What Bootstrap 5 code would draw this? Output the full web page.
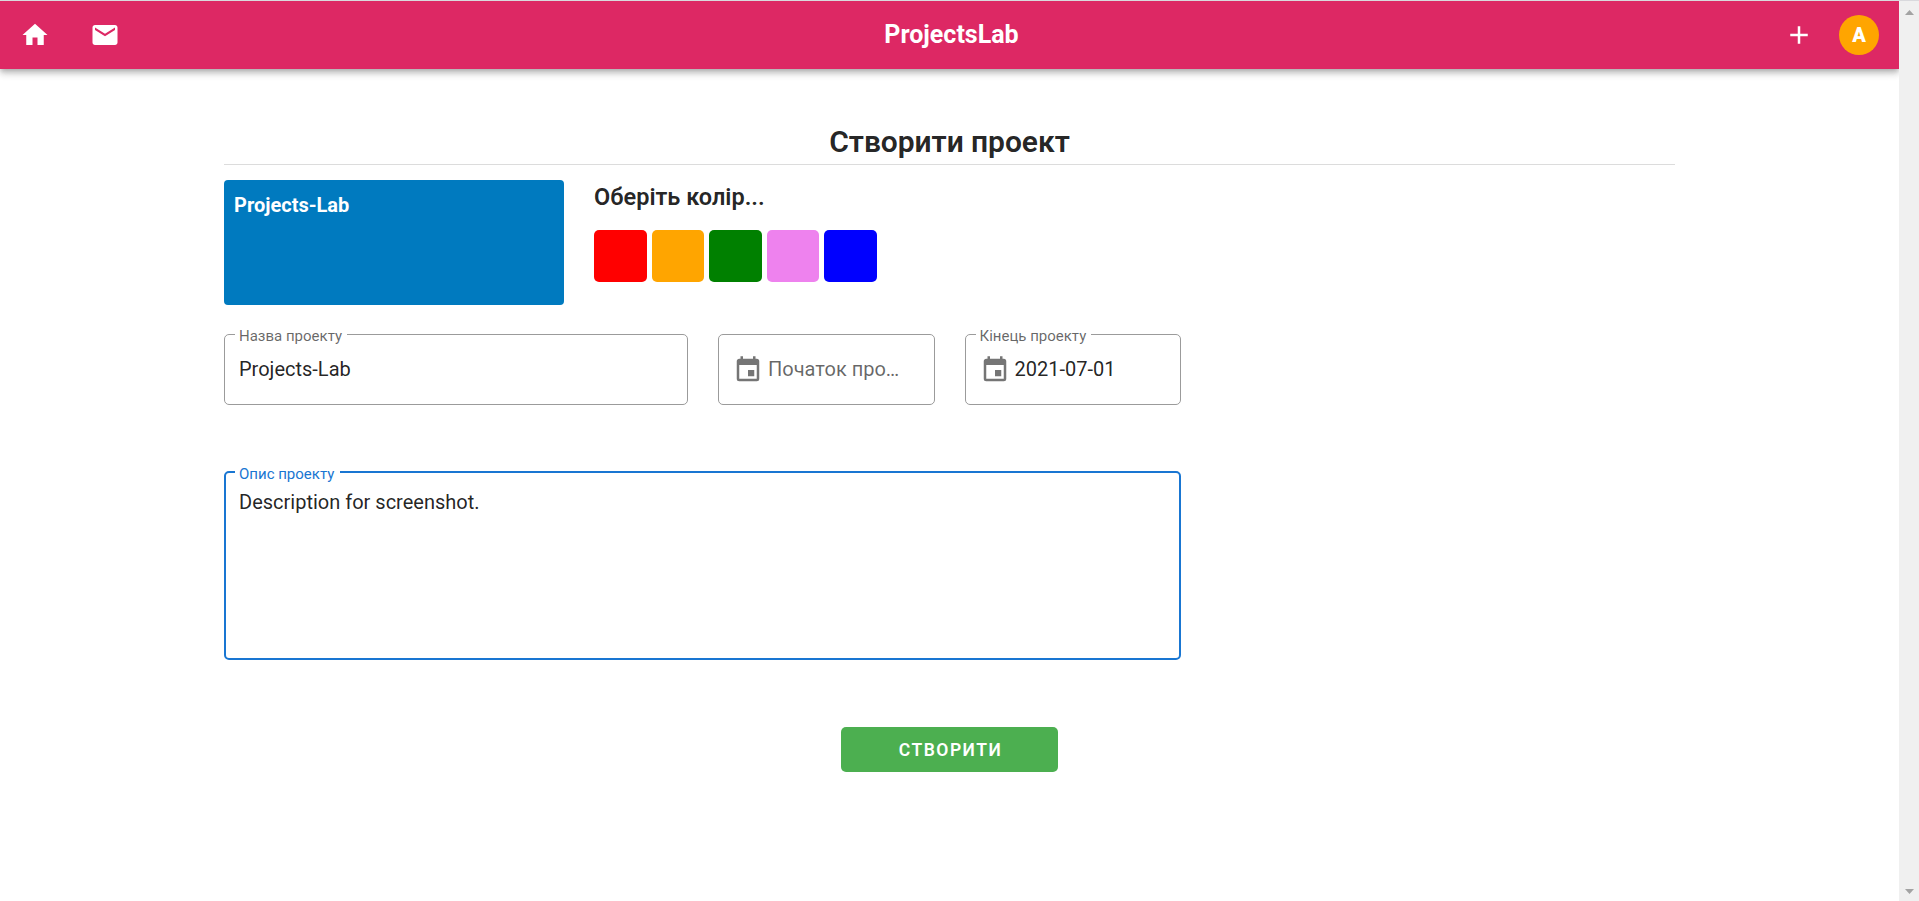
<!DOCTYPE html>
<html lang="uk">
<head>
<meta charset="utf-8">
<title>ProjectsLab</title>
<meta name="viewport" content="width=device-width, initial-scale=1">
<link href="https://cdn.jsdelivr.net/npm/bootstrap@5.3.0/dist/css/bootstrap.min.css" rel="stylesheet">
<style>
  body { font-family: Roboto, "Noto Sans", sans-serif; font-size: 20px; line-height: 25px; color: rgba(0,0,0,.87); background: #fff; border-top: 1px solid #d9d9dd; }
  .app-bar { height: 68px; background: #dd2864; color: #fff; box-shadow: 0 2px 5px -1px rgba(0,0,0,.2), 0 5px 6px rgba(0,0,0,.14), 0 1px 12px rgba(0,0,0,.12); }
  .bar-side { width: 300px; padding: 0 20px; }
  .bar-links { gap: 40px; }
  .bar-actions { gap: 25px; }
  .app-bar svg { width: 30px; height: 30px; fill: currentColor; display: block; }
  .brand-name { font-size: 25px; font-weight: 700; padding: 0 0 2px 4px; }
  .avatar { width: 40px; height: 40px; background: orange; font-weight: 900; font-size: 20px; }
  .page-col { width: 1451px; margin-left: 224px; }
  .page-title { font-size: 30px; font-weight: 600; line-height: 38px; letter-spacing: -.05px; margin: 54px 0 0; height: 41px; }
  .rule { height: 1px; background: #dcdcdc; }
  .picker-row { margin-top: 15px; gap: 30px; }
  .preview { width: 340px; height: 125px; border-radius: 4px; background: #007abf; color: #fff; font-weight: 700; padding: 13px 10px; }
  .pick-title { font-size: 23.5px; font-weight: 600; line-height: 34px; letter-spacing: 0; margin: 0; }
  .swatches { gap: 5px; margin-top: 16px; }
  .swatch { width: 52.5px; height: 52px; border-radius: 5px; }
  .form-rows { width: 957px; margin-top: 29px; }
  .field { position: relative; height: 71px; border: 1px solid #9b9b9b; border-radius: 5px; padding: 0 14px; }
  .field-label { position: absolute; top: -9px; left: 10px; padding: 0 5px 0 4px; background: #fff; font-size: 15px; line-height: 20px; color: rgba(0,0,0,.6); white-space: nowrap; }
  .field svg { width: 30px; height: 30px; fill: #757575; flex: none; }
  .field-name { width: 464px; }
  .field-date { width: 216.5px; }
  .field-date .value { margin-left: 5px; }
  .hint { color: rgba(0,0,0,.6); }
  .area { height: 189px; border: 2px solid #1976d2; padding: 17px 13px; margin-top: 66px; }
  .area .field-label { color: #1976d2; left: 9px; padding-right: 6px; }
  .submit-row { margin-top: 67px; }
  .btn-create, .btn-create:hover { width: 217px; height: 45px; background: #4caf50; color: #fff; border: 0; border-radius: 5px; font-size: 17.5px; font-weight: 600; letter-spacing: 1.5px; line-height: 45px; padding: 1px 0 0 2px; }
  .scroll-track { width: 20px; height: 900px; background: #f0f0f0; padding: 9px 0 7px; }
  .scroll-track svg { width: 9px; height: 5px; fill: #a3a3a3; }
</style>
</head>
<body class="overflow-hidden">
<div class="d-flex">
  <div class="flex-grow-1 overflow-hidden">
    <header class="app-bar d-flex align-items-center justify-content-between">
      <nav class="bar-side bar-links d-flex">
        <svg viewBox="0 0 24 24"><path d="M10 20v-6h4v6h5v-8h3L12 3 2 12h3v8z"/></svg>
        <svg viewBox="0 0 24 24"><path d="M20 4H4c-1.100 0-2 .9-2 2v12c0 1.100.9 2 2 2h16c1.100 0 2-.9 2-2V6c0-1.100-.9-2-2-2zm0 4l-8 5-8-5V6l8 5 8-5z"/></svg>
      </nav>
      <div class="brand-name">ProjectsLab</div>
      <div class="bar-side bar-actions d-flex align-items-center justify-content-end">
        <svg viewBox="0 0 24 24"><path d="M19 13h-6v6h-2v-6H5v-2h6V5h2v6h6z"/></svg>
        <div class="avatar rounded-circle d-flex align-items-center justify-content-center">A</div>
      </div>
    </header>
    <main class="page-col">
      <h1 class="page-title text-center">Створити проект</h1>
      <div class="rule"></div>
      <section class="picker-row d-flex">
        <div class="preview">Projects-Lab</div>
        <div>
          <h2 class="pick-title">Оберіть колір...</h2>
          <div class="swatches d-flex">
            <div class="swatch" style="background:red"></div>
            <div class="swatch" style="background:orange"></div>
            <div class="swatch" style="background:green"></div>
            <div class="swatch" style="background:violet"></div>
            <div class="swatch" style="background:blue"></div>
          </div>
        </div>
      </section>
      <div class="form-rows">
        <div class="d-flex justify-content-between">
          <div class="field field-name d-flex align-items-center"><span class="field-label">Назва проекту</span>Projects-Lab</div>
          <div class="field field-date d-flex align-items-center">
            <svg viewBox="0 0 24 24"><path d="M19 19H5V8h14m-3-7v2H8V1H6v2H5c-1.110 0-2 .89-2 2v14a2 2 0 0 0 2 2h14a2 2 0 0 0 2-2V5a2 2 0 0 0-2-2h-1V1m-1 11h-5v5h5v-5z"/></svg>
            <span class="value hint">Початок про…</span>
          </div>
          <div class="field field-date d-flex align-items-center">
            <span class="field-label">Кінець проекту</span>
            <svg viewBox="0 0 24 24"><path d="M19 19H5V8h14m-3-7v2H8V1H6v2H5c-1.110 0-2 .89-2 2v14a2 2 0 0 0 2 2h14a2 2 0 0 0 2-2V5a2 2 0 0 0-2-2h-1V1m-1 11h-5v5h5v-5z"/></svg>
            <span class="value">2021-07-01</span>
          </div>
        </div>
        <div class="field area"><span class="field-label">Опис проекту</span>Description for screenshot.</div>
      </div>
      <div class="submit-row d-flex justify-content-center"><button class="btn btn-create" type="button">СТВОРИТИ</button></div>
    </main>
  </div>
  <aside class="scroll-track d-flex flex-column align-items-center justify-content-between">
    <svg viewBox="0 0 9 5"><path d="M4.500 0L9 5H0z"/></svg>
    <svg viewBox="0 0 9 5"><path d="M0 0h9L4.500 5z"/></svg>
  </aside>
</div>
<script src="https://cdn.jsdelivr.net/npm/bootstrap@5.3.0/dist/js/bootstrap.bundle.min.js"></script>
</body>
</html>
